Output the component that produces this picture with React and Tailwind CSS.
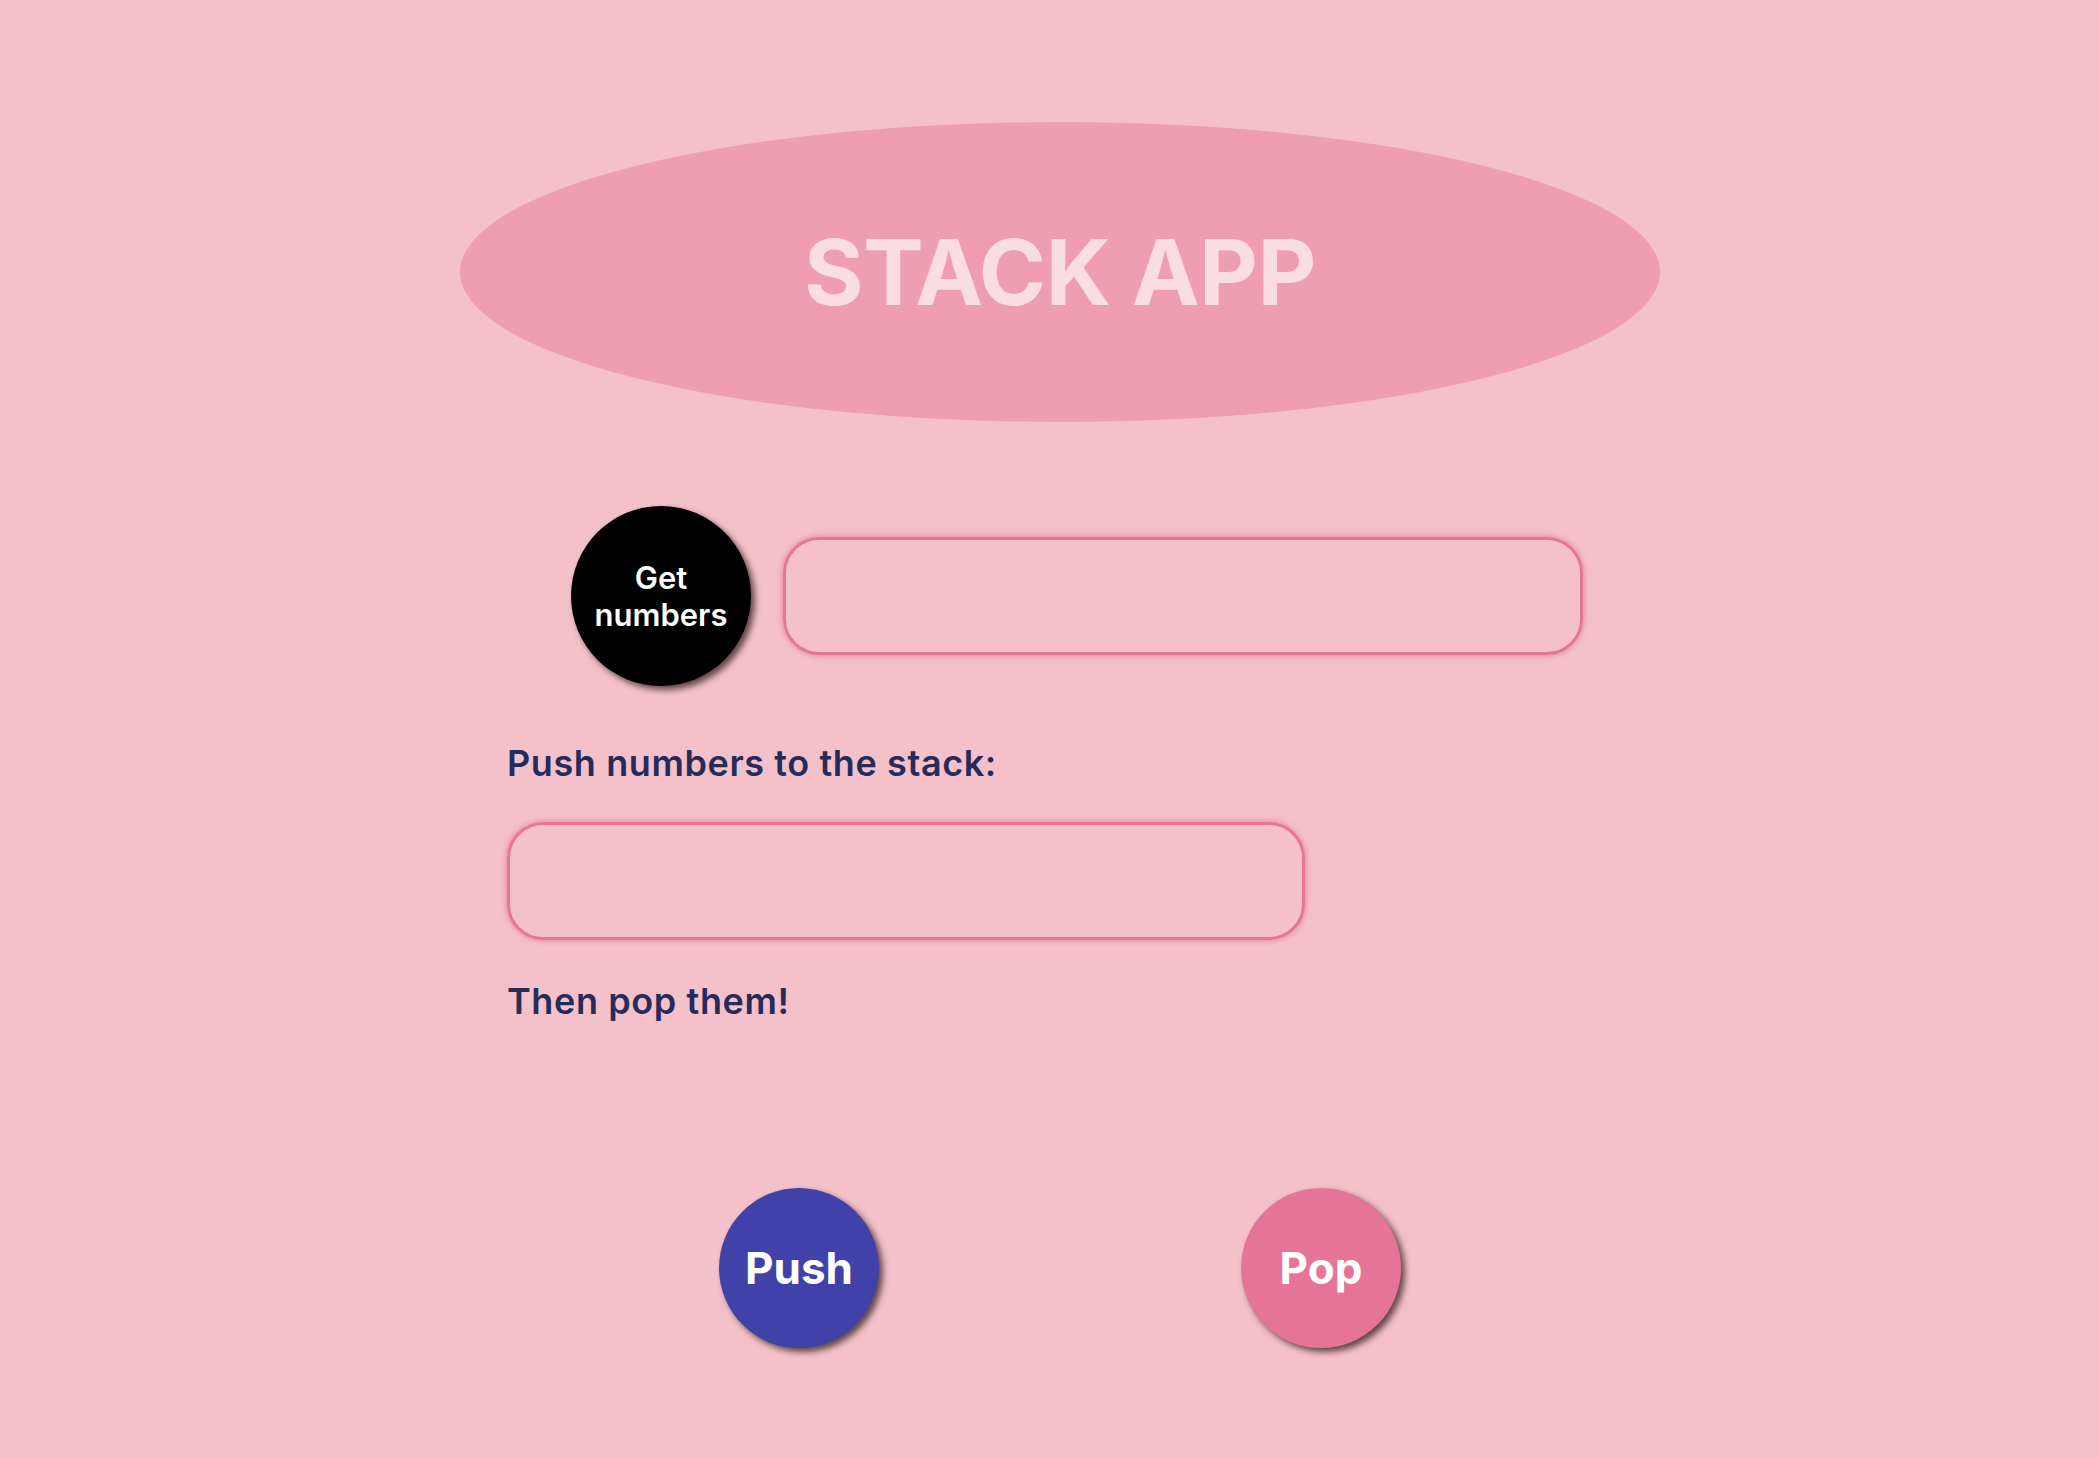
import { useState } from "react";

const font = "font-['Inter','Liberation_Sans',sans-serif]";

function RoundButton({ label, className = "", onClick }) {
  return (
    <button
      type="button"
      onClick={onClick}
      className={`grid place-items-center rounded-full text-white shadow-[4px_4px_6px_rgba(50,30,30,0.75)] ${className}`}
    >
      {label}
    </button>
  );
}

export default function App() {
  const [numbers, setNumbers] = useState("");
  const [stack, setStack] = useState([]);

  return (
    <div className={`min-h-screen w-full bg-[#f4c1ca] ${font}`}>
      <div className="ml-[460px] w-[1200px] pt-[122px]">
        {/* Title ellipse */}
        <div className="grid h-[300px] w-[1200px] place-items-center rounded-[50%] bg-[#ee9db2]">
          <h1 className="text-[91px] font-bold leading-none tracking-[-0.5px] text-[#fadde2]">STACK APP</h1>
        </div>

        <div className="mt-[84px] flex items-center gap-[32px] pl-[111px]">
          <RoundButton
            label={
              <span className="text-[31px] font-semibold leading-[37px]">
                Get
                <br />
                numbers
              </span>
            }
            className="h-[180px] w-[180px] bg-black"
          />
          <input
            readOnly
            value={stack.join(", ")}
            className="h-[118px] w-[800px] rounded-[36px] border-[3px] border-[#e5769a] bg-transparent px-6 text-3xl text-[#262c5a] shadow-[0_0_6px_#e5769a] outline-none"
          />
        </div>

        <div className="pl-[47px]">
          <p className="mt-[56px] text-[36px] font-semibold leading-[42px] tracking-[0.6px] text-[#262c5a]">Push numbers to the stack:</p>
          <input
            value={numbers}
            onChange={(e) => setNumbers(e.target.value)}
            className="mt-[38px] h-[118px] w-[798px] rounded-[36px] border-[3px] border-[#e5769a] bg-transparent px-6 text-3xl text-[#262c5a] shadow-[0_0_6px_#e5769a] outline-none"
          />
          <p className="mt-[40px] text-[36px] font-semibold leading-[42px] tracking-[0.6px] text-[#262c5a]">Then pop them!</p>
        </div>

        <div className="mt-[166px] flex justify-center gap-[362px]">
          <RoundButton
            label={<span className="text-[44px] font-bold">Push</span>}
            className="h-[160px] w-[160px] bg-[#4042a9]"
            onClick={() => {
              if (numbers.trim()) setStack((s) => [...s, numbers.trim()]);
              setNumbers("");
            }}
          />
          <RoundButton
            label={<span className="text-[44px] font-bold">Pop</span>}
            className="h-[160px] w-[160px] bg-[#e57498]"
            onClick={() => setStack((s) => s.slice(0, -1))}
          />
        </div>
      </div>
    </div>
  );
}
